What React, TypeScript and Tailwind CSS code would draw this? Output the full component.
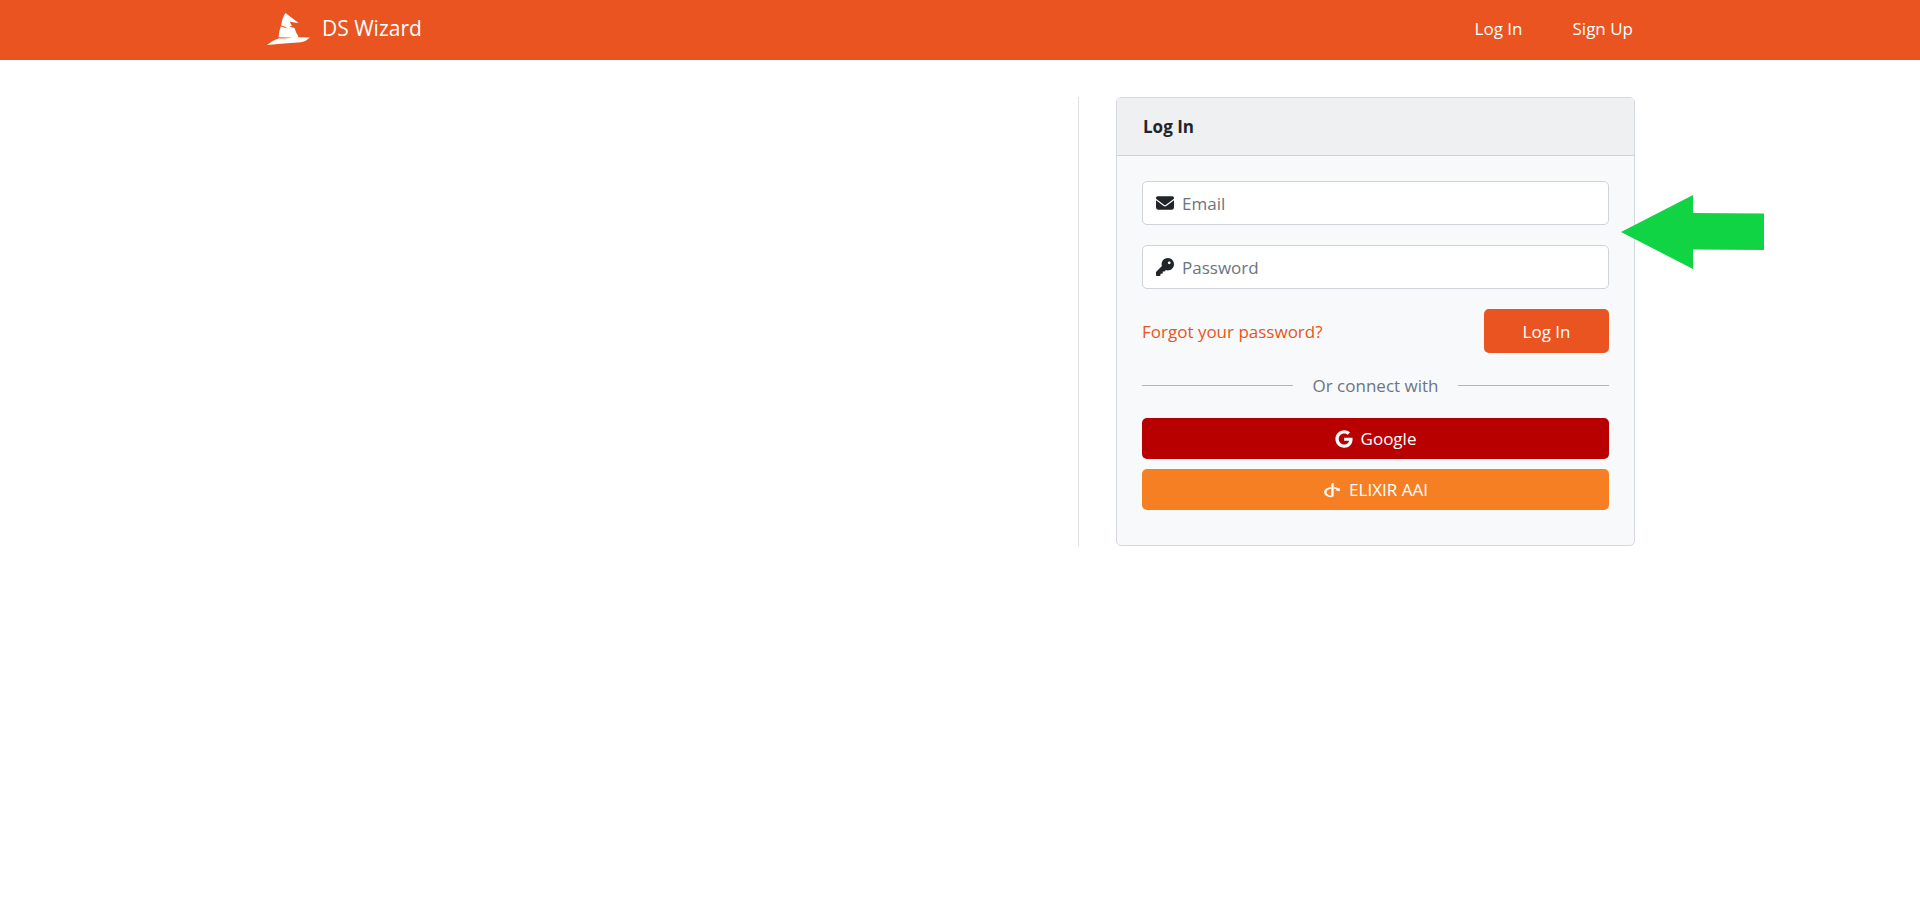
import type { ReactNode } from "react";
import { FaOpenid } from "react-icons/fa";
import { FaEnvelope, FaGoogle, FaKey } from "react-icons/fa6";

function WizardHat() {
  return (
    <svg viewBox="0 0 43 32" className="h-8 w-[43px]" fill="currentColor" aria-hidden="true">
      <path d="M18.500 0 L31.600 10 Q27 9.800 22.800 8.600 Q23.500 11 25 12.700 L22.500 13.700 L27.500 15 Q29 20 31.300 23 L31 24.300 L43 24.500 Q39 28.500 34 29.300 Q17 30.500 0 32 Q5 27.500 12 25.300 Q19 25.600 25.500 24.700 Q19 24.600 11.500 24.200 Q12 18 13.800 13.600 L20.500 15.400 Q19 13.600 14.200 12.600 Q15 5 18.500 0 Z" />
    </svg>
  );
}

type FieldProps = { id: string; type: string; label: string; icon: ReactNode };

function Field({ id, type, label, icon }: FieldProps) {
  return (
    <div className="flex h-11 items-center rounded-[5px] border border-[#ced4da] bg-white px-[13px] text-[#212529]">
      <label htmlFor={id} aria-label={label}>{icon}</label>
      <input
        id={id}
        type={type}
        placeholder={label}
        className="ml-2 min-w-0 flex-1 bg-transparent outline-none placeholder:text-[#6c757d]"
      />
    </div>
  );
}

export default function App() {
  return (
    <div className="font-['Open_Sans','Noto_Sans',sans-serif] text-[17px] leading-[27px] text-[#212529]">
      <header className="bg-[#e95420] text-white">
        <div className="mx-auto flex h-[60px] max-w-[1386px] items-center justify-between pb-[3px]">
          <a href="#" className="flex items-center gap-3 text-[21px]">
            <WizardHat />
            DS Wizard
          </a>
          <nav className="flex gap-[50px] px-5">
            <a href="#login">Log In</a>
            <a href="#signup">Sign Up</a>
          </nav>
        </div>
      </header>

      <main className="mx-auto mt-[37px] flex max-w-[1386px] justify-end px-[18px]">
        <div className="border-l border-[#dee2e6] pl-[37px]">
          <section className="relative w-[519px] max-w-full rounded-[5px] border border-[#d5d8dc] bg-[#f8f9fb]">
            <h1 className="border-b border-[#d0d4d8] bg-[#eff0f2] px-[26px] py-[15px] font-bold">Log In</h1>
            <form className="px-[25px] pt-[25px] pb-[35px]">
              <div className="flex flex-col gap-5">
                <Field id="email" type="email" label="Email" icon={<FaEnvelope className="size-[18px]" />} />
                <Field id="password" type="password" label="Password" icon={<FaKey className="size-[18px]" />} />
                <div className="flex items-center justify-between">
                  <a href="#forgot" className="text-[#e95420]">Forgot your password?</a>
                  <button type="submit" className="h-11 w-[125px] rounded-[5px] bg-[#e95420] text-white">Log In</button>
                </div>
              </div>
              <div className="my-[19px] flex items-center gap-5 text-[#6c757d]">
                <span className="h-px flex-1 bg-[#adb5bd]" />
                Or connect with
                <span className="h-px flex-1 bg-[#adb5bd]" />
              </div>
              <div className="flex flex-col gap-2.5 text-white">
                <button type="button" className="flex h-[41px] items-center justify-center gap-2 rounded-[5px] bg-[#b90000]">
                  <FaGoogle className="size-[18px]" />
                  Google
                </button>
                <button type="button" className="flex h-[41px] items-center justify-center gap-2 rounded-[5px] bg-[#f57f22]">
                  <FaOpenid className="size-[18px]" />
                  ELIXIR AAI
                </button>
              </div>
            </form>
            <svg viewBox="0 0 143 74" className="absolute top-[97px] left-[504px] h-[74px] w-[143px]" fill="#11d444" aria-hidden="true">
              <path d="M0 37 L72 0 V18 L143 18.500 V55 L72 54.500 V74 Z" />
            </svg>
          </section>
        </div>
      </main>
    </div>
  );
}
